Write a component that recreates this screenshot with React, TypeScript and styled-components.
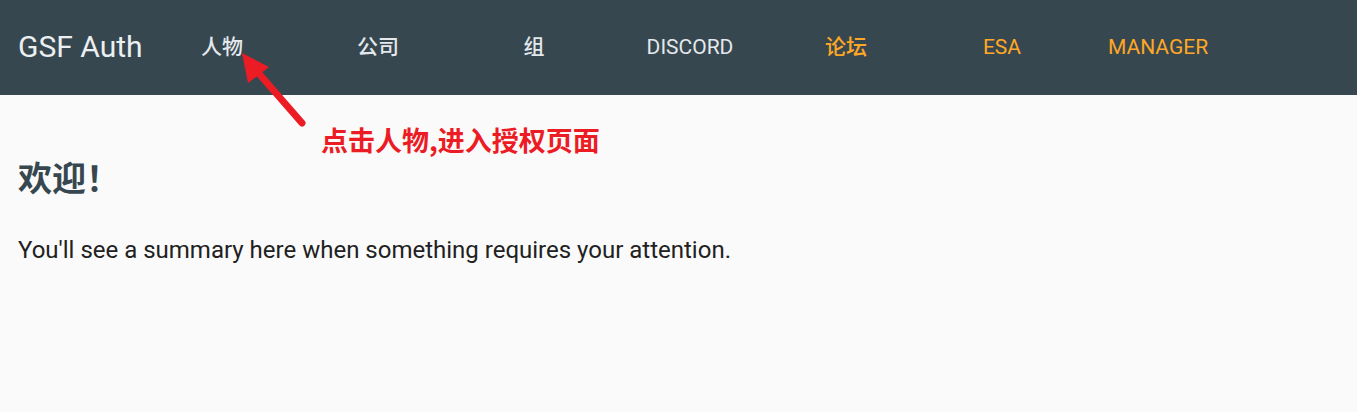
import React from "react";
import styled, { createGlobalStyle } from "styled-components";

const GlobalStyle = createGlobalStyle`
  html, body {
    margin: 0;
    padding: 0;
    background: #fafafa;
    font-family: Roboto, "Noto Sans CJK SC", sans-serif;
  }
`;

const NAV_ITEMS = [
  { label: "人物", accent: false, cjk: true },
  { label: "公司", accent: false, cjk: true },
  { label: "组", accent: false, cjk: true },
  { label: "DISCORD", accent: false, cjk: false },
  { label: "论坛", accent: true, cjk: true },
  { label: "ESA", accent: true, cjk: false },
  { label: "MANAGER", accent: true, cjk: false },
];

const App: React.FC = () => {
  return (
    <>
      <GlobalStyle />
      <Page>
        <NavBar>
          <Brand>GSF Auth</Brand>
          <NavList>
            {NAV_ITEMS.map((item) => (
              <NavItem key={item.label} $accent={item.accent} $cjk={item.cjk}>
                {item.label}
              </NavItem>
            ))}
          </NavList>
        </NavBar>

        <Content>
          <Heading>欢迎！</Heading>
          <Summary>
            You'll see a summary here when something requires your attention.
          </Summary>
        </Content>

        {/* 标注箭头 */}
        <Arrow width="80" height="90" viewBox="0 0 80 90">
          <line x1="66" y1="75" x2="18" y2="20" stroke="#ec1c24" strokeWidth="7" strokeLinecap="round" />
          <polygon points="6,5 33,19 12,35" fill="#ec1c24" />
        </Arrow>
        <Annotation>点击人物,进入授权页面</Annotation>
      </Page>
    </>
  );
};

export default App;

const Page = styled.div`
  position: relative;
  width: 1357px;
  height: 412px;
  background: #fafafa;
  overflow: hidden;
`;

const NavBar = styled.header`
  display: flex;
  align-items: center;
  height: 95px;
  background: #37474f;
  padding-left: 18px;
  box-sizing: border-box;
`;

const Brand = styled.div`
  width: 126px;
  color: #eceff1;
  font-size: 30px;
  font-family: Roboto, sans-serif;
  padding-bottom: 2px;
`;

const NavList = styled.nav`
  display: flex;
  align-items: center;
`;

const NavItem = styled.div<{ $accent: boolean; $cjk: boolean }>`
  width: 156px;
  text-align: center;
  font-size: 21px;
  font-weight: ${(p) => (p.$cjk ? 500 : 400)};
  line-height: 24px;
  padding-bottom: 1px;
  color: ${(p) => (p.$accent ? "#ffa726" : "#e3e8ec")};
`;

const Content = styled.main`
  padding: 0 18px;
`;

const Heading = styled.h1`
  margin: 53px 0 0;
  font-size: 34px;
  font-weight: 700;
  color: #37474f;
  line-height: 58px;
  font-family: "Noto Sans CJK SC", sans-serif;
`;

const Summary = styled.p`
  margin: 29px 0 0;
  font-size: 24px;
  color: #212121;
  line-height: 30px;
`;

const Arrow = styled.svg`
  position: absolute;
  left: 236px;
  top: 48px;
`;

const Annotation = styled.div`
  position: absolute;
  left: 321px;
  top: 122px;
  font-size: 27px;
  font-weight: 700;
  color: #ec1c24;
  font-family: "Noto Sans CJK SC", sans-serif;
  line-height: 36px;
`;
